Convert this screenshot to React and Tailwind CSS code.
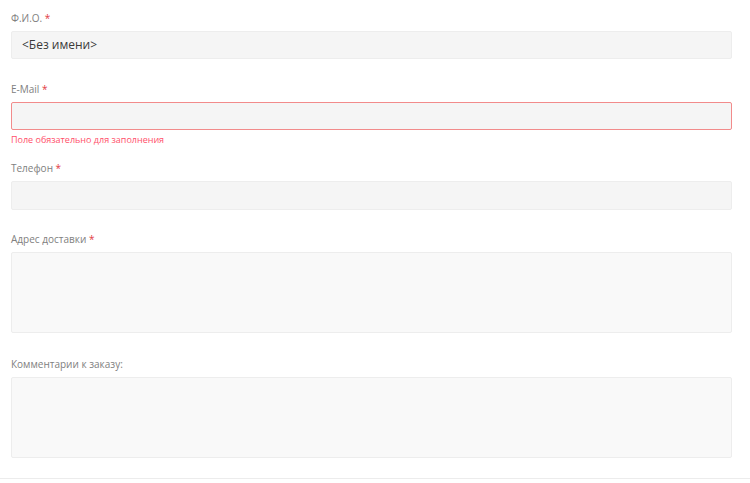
export default function App() {
  const label = "block text-[10px] leading-[13px] text-[#808080]";
  const star = "text-[#e2393f]";
  return (
    <div className="w-[750px] h-[483px] bg-white font-['Open_Sans',sans-serif] overflow-hidden">
      <div className="pl-[11px] pr-[18px] pt-[12px] pb-[20px]">
        <div>
          <label className={label}>Ф.И.О. <span className={star}>*</span></label>
          <div className="mt-[6px] h-[28px] bg-[#f5f5f5] border border-[#ededed] rounded-[2px] flex items-center pl-[10px] text-[12px] text-[#3a3a3a]">
            &lt;Без имени&gt;
          </div>
        </div>

        <div className="mt-[24px]">
          <label className={label}>E-Mail <span className={star}>*</span></label>
          <div className="mt-[6px] h-[28px] bg-[#f5f5f5] border border-[#f28b8b] rounded-[2px]" />
          <div className="mt-[4px] text-[9px] leading-[12px] text-[#ff4f6a]">Поле обязательно для заполнения</div>
        </div>

        <div className="mt-[16px]">
          <label className={label}>Телефон <span className={star}>*</span></label>
          <div className="mt-[6px] h-[29px] bg-[#f5f5f5] border border-[#ededed] rounded-[2px]" />
        </div>

        <div className="mt-[23px]">
          <label className={label}>Адрес доставки <span className={star}>*</span></label>
          <div className="mt-[6px] h-[81px] bg-[#f9f9f9] border border-[#ededed] rounded-[2px]" />
        </div>

        <div className="mt-[25px]">
          <label className={label}>Комментарии к заказу:</label>
          <div className="mt-[6px] h-[81px] bg-[#f9f9f9] border border-[#ededed] rounded-[2px]" />
        </div>
      </div>
      <div className="border-t border-[#ececec]" />
    </div>
  );
}
